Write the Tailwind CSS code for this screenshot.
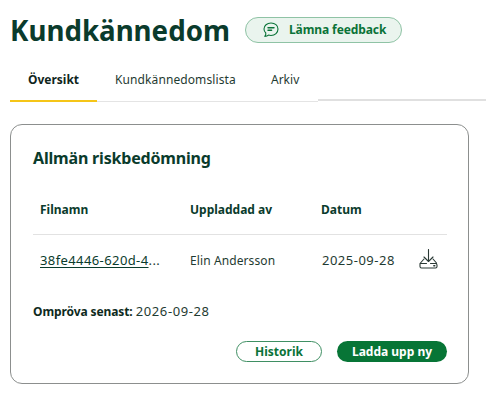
<!DOCTYPE html>
<html lang="sv">
<head>
  <meta charset="UTF-8" />
  <title>Kundkännedom</title>
  <script src="https://cdn.jsdelivr.net/npm/@tailwindcss/browser@4"></script>
</head>
<body class="bg-white font-['Noto_Sans',sans-serif] text-[#0b3b2e] overflow-hidden">
  <div class="w-[486px] h-[400px] overflow-hidden">
    <!-- Header -->
    <div class="flex items-center h-[36px] mt-[12px] pl-[10px]">
      <h1 class="w-[235px] text-[27.7px] leading-[36px] font-bold text-[#0a3b2c]">Kundkännedom</h1>
      <button class="flex items-center w-[157px] h-[26px] pl-[16px] rounded-full border border-[#8fc3a5] bg-[#eaf4ee] text-[#0a7338] text-[12px] tracking-[-0.1px] font-bold">
        <svg class="w-[18px] h-[18px] mr-[9px]" viewBox="0 0 18 18" fill="none" stroke="#0a7338" stroke-width="1.1" stroke-linecap="round" stroke-linejoin="round">
          <path d="M9 2C5 2 2 4.600 2 8c0 1.600.7 3 1.800 4 .2 1.200-.2 2.400-1 3.400 1.500 0 2.800-.5 3.700-1.300.8.3 1.600.4 2.500.4 4 0 7-2.900 7-6.500S13 2 9 2z" />
          <path d="M6 6.800h6M6 9.300h3.600" stroke-width="1.4" />
        </svg>
        Lämna feedback
      </button>
    </div>

    <!-- Tabs -->
    <div class="flex items-start mt-[12px] ml-[10px] h-[42px]">
      <div class="flex h-full border-b border-[#e4e4e4] w-[308px]">
        <div class="w-[87px] h-[42px] border-b-2 border-[#f5c518] text-center text-[12px] leading-[40px] font-bold text-[#10261d]">Översikt</div>
        <div class="w-[174px] pl-[18px] text-[12px] tracking-[0.1px] leading-[40px] text-[#1f3b32]">Kundkännedomslista</div>
        <div class="text-[12px] leading-[40px] text-[#1f3b32]">Arkiv</div>
      </div>
      <div class="flex-1 h-[41px] border-b-2 border-[#e0e0e0]"></div>
    </div>

    <!-- Card -->
    <div class="mt-[22px] ml-[10px] w-[459px] h-[260px] rounded-[12px] border border-[#8c8f8e] px-[22px] pt-[21px]">
      <h2 class="text-[16px] tracking-[-0.18px] leading-[24px] font-bold text-[#0a3b2c]">Allmän riskbedömning</h2>

      <div class="w-[414px] mt-[31px]">
        <div class="grid grid-cols-[150px_131px_1fr] pl-[7px] h-[34px] border-b border-[#e2e2e2] text-[12px] leading-[18px] font-bold text-[#0a3b2c]">
          <span>Filnamn</span>
          <span>Uppladdad av</span>
          <span>Datum</span>
        </div>
        <div class="grid grid-cols-[150px_132px_97px_1fr] items-center pl-[7px] h-[51px] text-[12px] text-[#1f3b32]">
          <span class="text-[13px] tracking-[0.4px] whitespace-nowrap"><a class="underline underline-offset-2 text-[#0a3b2c]">38fe4446-620d-4</a>...</span>
          <span class="tracking-[0.1px]">Elin Andersson</span>
          <span class="text-[13px] tracking-[0.5px]">2025-09-28</span>
          <svg class="w-[20px] h-[20px] -translate-y-[2px]" viewBox="0 0 20 20" fill="none" stroke="#2b3a36" stroke-width="1.1" stroke-linecap="round" stroke-linejoin="round">
            <path d="M9.500 .5v12M5 8l4.500 4.500L14 8" />
            <path d="M5 10 1 14.500V17.500A1.500 1.500 0 0 0 2.500 19h14a1.500 1.500 0 0 0 1.500-1.500v-1.500a1.500 1.500 0 0 0-1.500-1.500H11.500M1 14.500H7.500M14 10l3.500 4" />
            <path d="M14.800 16.800h1" stroke-width="1.400" />
          </svg>
        </div>
      </div>

      <p class="mt-[16px] text-[12px] leading-[18px] text-[#1f3b32]"><span class="font-bold text-[#0e2a20] tracking-[-0.1px]">Ompröva senast:</span> <span class="text-[13px] tracking-[0.6px]">2026-09-28</span></p>

      <div class="flex justify-end gap-[15px] w-[414px] mt-[20px]">
        <button class="w-[86px] h-[21px] rounded-full border border-[#3f8f63] text-[#0a7338] text-[12px] leading-[18px] font-bold">Historik</button>
        <button class="w-[110px] h-[21px] rounded-full bg-[#077536] text-white text-[12px] leading-[20px] font-bold">Ladda upp ny</button>
      </div>
    </div>
  </div>
</body>
</html>
